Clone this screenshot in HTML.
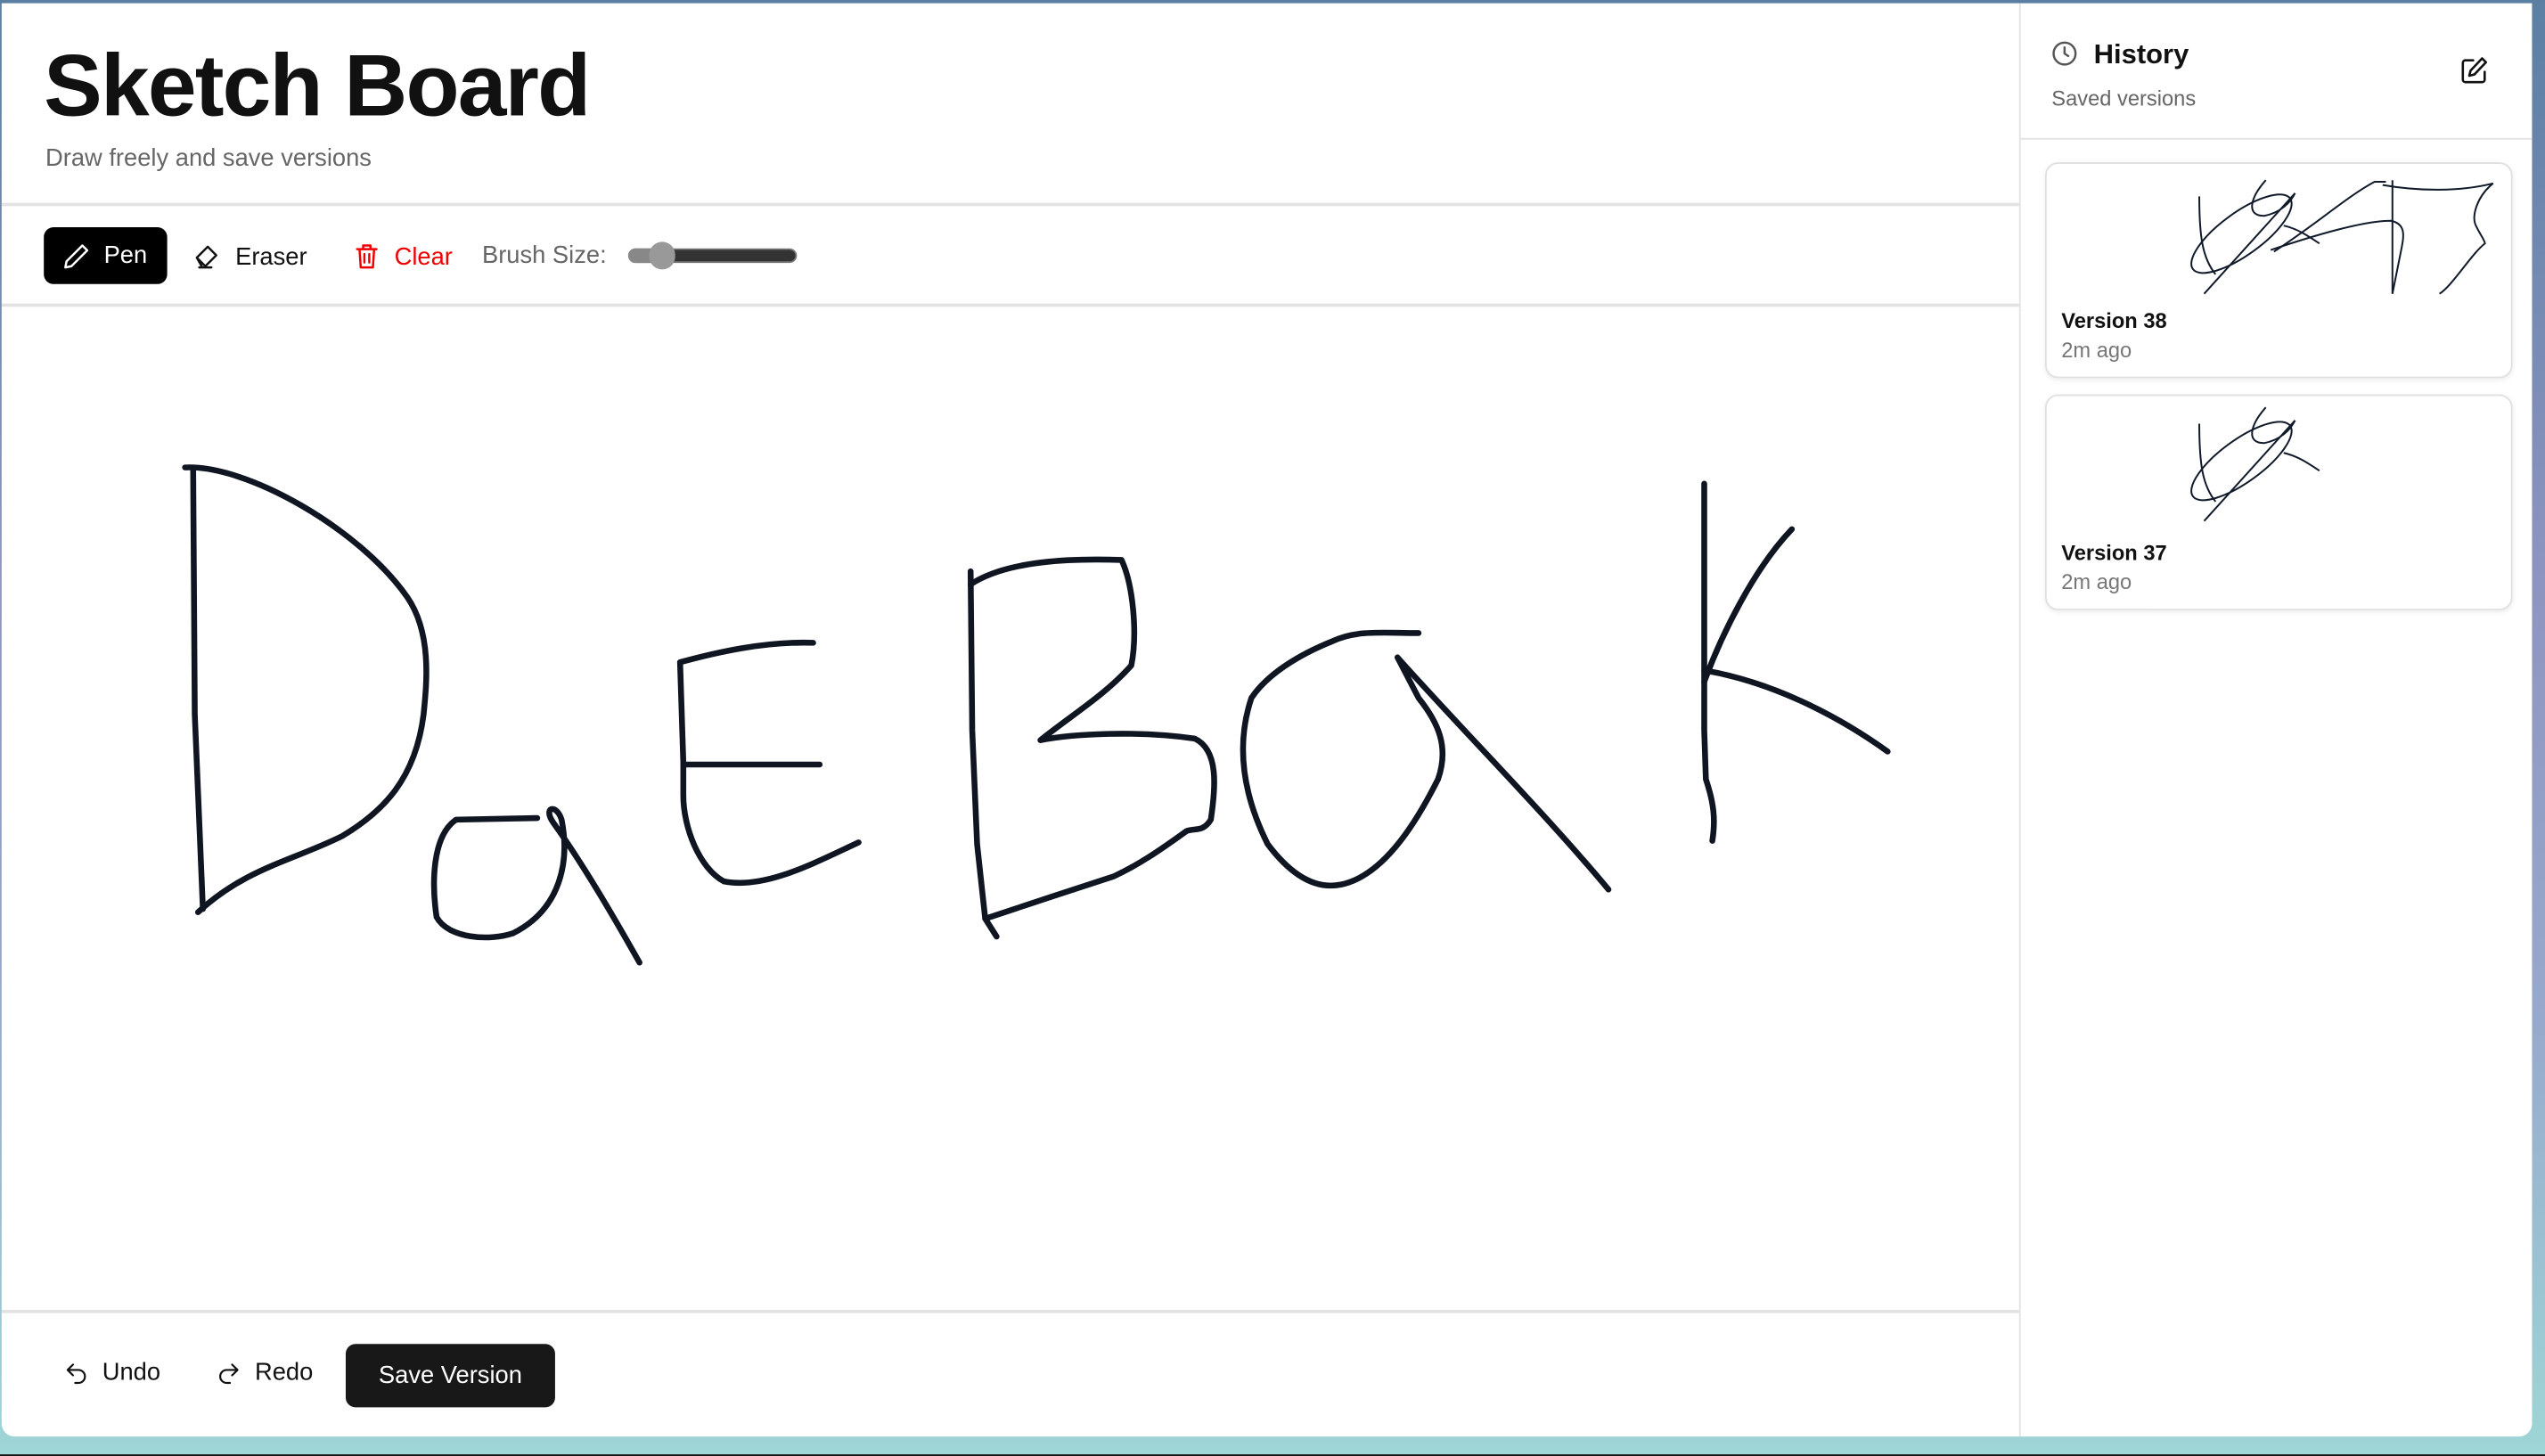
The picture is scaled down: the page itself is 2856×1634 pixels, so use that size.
<!DOCTYPE html>
<html><head><meta charset="utf-8"><style>
*{box-sizing:border-box;margin:0;padding:0}
html,body{width:2856px;height:1634px;overflow:hidden;background:#000}
#bg{position:absolute;left:0;top:0;width:1568px;height:897px;transform:scale(1.82143,1.8216);transform-origin:0 0;
background:linear-gradient(180deg,#5b7fa3 0%,#8e95c0 40%,#97a9cc 70%,#9fd6d6 100%);font-family:"Liberation Sans",sans-serif;color:#111}
#blk{position:absolute;left:0;right:0;bottom:0;height:1.5px;background:#111}
#win{position:absolute;left:1px;top:2px;width:1559px;height:883px;background:#fff;border-radius:0 0 8px 8px;overflow:hidden}
#main{position:absolute;left:0;top:0;width:1243px;height:883px}
#side{position:absolute;left:1243px;top:0;width:316px;height:883px;border-left:1px solid #e3e3e3}
h1{position:absolute;left:26px;top:20px;font-size:54px;font-weight:bold;letter-spacing:-1px}
.sub{position:absolute;left:27px;top:87px;font-size:15px;color:#666}
.hl{position:absolute;left:0;width:1243px;height:2px;background:#e2e2e2}
.btn{position:absolute;font-size:15px;display:flex;align-items:center;gap:8px}
svg.i{fill:none;stroke:currentColor;stroke-width:1.8;stroke-linecap:round;stroke-linejoin:round}
.card{position:absolute;left:15px;width:288px;height:133px;border:1px solid #e0e0e0;border-radius:8px;box-shadow:0 1px 3px rgba(0,0,0,.08);overflow:hidden}
.card b{position:absolute;left:9px;top:89px;font-size:13px;font-weight:600}
.card span{position:absolute;left:9px;top:107px;font-size:13px;color:#777}
</style></head><body>
<div id="bg">
<div id="win">
<div id="main">
<h1>Sketch Board</h1>
<div class="sub">Draw freely and save versions</div>
<div class="hl" style="top:123px"></div>
<div class="btn" style="left:26px;top:138px;width:76px;height:35px;background:#000;color:#fff;border-radius:6px;padding-left:11px">
<svg class="i" width="18" height="18" viewBox="0 0 24 24"><path d="M17 3l4 4L8 20l-5 1 1-5z"/></svg>Pen</div>
<div class="btn" style="left:118px;top:147px"><svg class="i" width="18" height="18" viewBox="0 0 24 24"><path d="M3 13l9-9 7 7-9 9zM5 21h10M3 13l4 7"/></svg>Eraser</div>
<div class="btn" style="left:216px;top:147px;color:#e00"><svg class="i" width="18" height="18" viewBox="0 0 24 24"><path d="M4 6h16M9 6V3h6v3M6 6l1 15h10l1-15M10 10v7M14 10v7"/></svg>Clear</div>
<div class="btn" style="left:296px;top:147px;color:#666">Brush Size:</div>
<div style="position:absolute;left:386px;top:151px;width:104px;height:9px;border-radius:5px;background:#333;border:1px solid #777"></div>
<div style="position:absolute;left:386px;top:151px;width:24px;height:9px;border-radius:5px;background:#888"></div>
<div style="position:absolute;left:399px;top:147px;width:16px;height:17px;border-radius:8px;background:#999"></div>
<div class="hl" style="top:185px"></div>
<svg style="position:absolute;left:0;top:-2px" width="1243" height="810" fill="none" stroke="#101522" stroke-width="3.6" stroke-linecap="round" stroke-linejoin="round">
<path d="M118,288 L119,440 L124,560"/>
<path d="M113,288 C150,286 220,325 250,368 C265,390 262,420 260,440 C255,480 235,500 210,515 C180,530 150,535 121,562"/>
<path d="M330,504 L280,505 C265,515 265,545 268,565 C275,578 300,580 315,575 C345,560 350,530 345,505 C342,495 333,497 340,507 C360,535 380,570 393,593"/>
<path d="M418,408 L420,470 L420,490 C420,510 430,535 445,543 C470,548 500,532 528,519"/>
<path d="M418,408 C440,402 470,395 500,396"/>
<path d="M420,471 L504,471"/>
<path d="M597,352 L598,450 L601,520 L606,566 L613,577"/>
<path d="M597,360 C620,345 660,344 690,345 C697,360 700,390 696,410 C680,428 660,440 640,456 C660,452 700,450 735,455 C750,462 748,485 745,505 C740,513 735,510 730,512 C712,525 700,533 685,540 C660,548 630,558 606,566"/>
<path d="M873,390 C850,390 835,388 820,395 C800,403 780,415 770,430 C760,460 765,490 780,520 C795,540 810,548 825,545 C850,540 870,510 885,480 C892,460 885,445 873,430 L860,405 C900,450 950,500 990,548"/>
<path d="M1049,298 L1049,450 L1050,480 C1055,495 1056,505 1054,518"/>
<path d="M1103,326 C1080,350 1060,390 1049,420"/>
<path d="M1049,413 C1090,420 1130,440 1162,463"/>
</svg>
<div class="hl" style="top:805px"></div>
<div class="btn" style="left:38px;top:835px"><svg class="i" width="16" height="16" viewBox="0 0 24 24"><path d="M9 4L4 9l5 5M4 9h10a6 6 0 010 12h-3"/></svg>Undo</div>
<div class="btn" style="left:132px;top:835px"><svg class="i" width="16" height="16" viewBox="0 0 24 24"><path d="M15 4l5 5-5 5M20 9H10a6 6 0 000 12h3"/></svg>Redo</div>
<div class="btn" style="left:212px;top:826px;width:129px;height:39px;background:#181818;color:#fff;border-radius:6px;justify-content:center">Save Version</div>
</div>
<div id="side">
<svg class="i" style="position:absolute;left:18px;top:22px;color:#555" width="18" height="18" viewBox="0 0 24 24"><circle cx="12" cy="12" r="9"/><path d="M12 7v5l3 2"/></svg>
<div style="position:absolute;left:45px;top:22px;font-size:17px;font-weight:bold">History</div>
<div style="position:absolute;left:19px;top:51px;font-size:13px;color:#666">Saved versions</div>
<svg class="i" style="position:absolute;left:270px;top:32px" width="19" height="19" viewBox="0 0 24 24"><path d="M11 4H5a2 2 0 00-2 2v13a2 2 0 002 2h13a2 2 0 002-2v-6"/><path d="M18 2.5l3 3L12 15l-4 1 1-4z"/></svg>
<div style="position:absolute;left:0;top:83px;width:316px;height:1px;background:#e3e3e3"></div>
<div class="card" style="top:98px">
<svg style="position:absolute;left:0;top:0" width="288" height="90" fill="none" stroke="#111a2a" stroke-width="1.1">
<path d="M94,20 C94,45 96,58 104,68"/>
<ellipse cx="120" cy="43" rx="37" ry="13" transform="rotate(-36 120 43)"/>
<path d="M135,10 C126,20 122,32 134,32 C144,30 150,24 153,18"/>
<path d="M97,80 L153,18"/>
<path d="M146,38 C155,40 162,45 168,49"/>
<path d="M140,54 C165,38 185,20 202,11 L209,11"/>
<path d="M138,53 C165,44 195,35 212,35 C222,37 220,45 218,55 L213,80"/>
<path d="M213,10 L213,80"/>
<path d="M207,13 C230,17 255,17 275,12 C265,20 262,32 264,37 C266,42 270,47 270,49 C262,55 250,75 242,80"/>
</svg>
<b>Version 38</b><span>2m ago</span></div>
<div class="card" style="top:241px">
<svg style="position:absolute;left:0;top:0" width="288" height="90" fill="none" stroke="#111a2a" stroke-width="1.1">
<path d="M94,17 C94,42 96,55 104,65"/>
<ellipse cx="120" cy="40" rx="37" ry="13" transform="rotate(-36 120 40)"/>
<path d="M135,7 C126,17 122,29 134,29 C144,27 150,21 153,15"/>
<path d="M97,77 L153,15"/>
<path d="M146,35 C155,37 162,42 168,46"/>
</svg>
<b>Version 37</b><span>2m ago</span></div>
</div>
</div>
<div id="blk"></div>
</div>
</body></html>
